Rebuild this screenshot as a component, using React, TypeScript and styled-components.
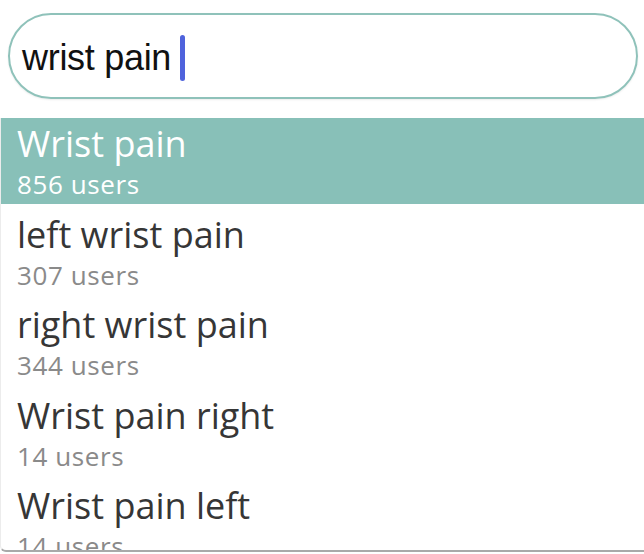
import React from "react";
import styled, { createGlobalStyle } from "styled-components";

const Global = createGlobalStyle`
  html, body { margin: 0; padding: 0; background: #ffffff; }
  body { width: 644px; height: 554px; overflow: hidden; }
`;

const Screen = styled.div`
  width: 644px;
  height: 554px;
  display: flex;
  flex-direction: column;
  background: #ffffff;
  overflow: hidden;
`;

const SearchBar = styled.div`
  padding: 13px 6px 0 8px;
  height: 105px;
  box-sizing: border-box;
`;

const Pill = styled.div`
  height: 86px;
  box-sizing: border-box;
  border: 2px solid #8fc2ba;
  border-radius: 43px;
  display: flex;
  align-items: center;
  padding: 4px 0 0 12px;
  box-shadow: 0 1px 2px rgba(0, 0, 0, 0.08);
`;

const Query = styled.span`
  font-family: "Liberation Sans", Arial, sans-serif;
  font-size: 36px;
  color: #111;
  letter-spacing: -0.3px;
`;

const Caret = styled.span`
  display: inline-block;
  width: 5px;
  height: 46px;
  border-radius: 3px;
  background: #4f63dc;
  margin-left: 9px;
`;

const List = styled.div`
  margin-top: 13px;
  height: 434px;
  box-sizing: border-box;
  border-bottom: 2px solid #a9a9a9;
  border-left: 1px solid #ececec;
  border-bottom-left-radius: 6px;
  display: flex;
  flex-direction: column;
  overflow: hidden;
`;

const Row = styled.div<{ $active?: boolean }>`
  flex: 0 0 auto;
  height: 86px;
  margin-bottom: 4.5px;
  box-sizing: border-box;
  padding: 2px 0 0 16px;
  background: ${(p) => (p.$active ? "#88c0b8" : "transparent")};
  display: flex;
  flex-direction: column;
`;

const Title = styled.div<{ $active?: boolean }>`
  font-family: "Open Sans", sans-serif;
  font-size: 36px;
  line-height: 48px;
  color: ${(p) => (p.$active ? "#ffffff" : "#363636")};
`;

const Sub = styled.div<{ $active?: boolean }>`
  font-family: "Open Sans", sans-serif;
  font-size: 26px;
  line-height: 32px;
  letter-spacing: 0.6px;
  color: ${(p) => (p.$active ? "#ffffff" : "#8a8a8a")};
`;

const items = [
  { title: "Wrist pain", users: "856 users", active: true },
  { title: "left wrist pain", users: "307 users" },
  { title: "right wrist pain", users: "344 users" },
  { title: "Wrist pain right", users: "14 users" },
  { title: "Wrist pain left", users: "14 users" },
];

export default function App() {
  return (
    <>
      <Global />
      <Screen>
        <SearchBar>
          <Pill>
            <Query>wrist pain</Query>
            <Caret />
          </Pill>
        </SearchBar>
        <List>
          {items.map((it) => (
            <Row key={it.title} $active={it.active}>
              <Title $active={it.active}>{it.title}</Title>
              <Sub $active={it.active}>{it.users}</Sub>
            </Row>
          ))}
        </List>
      </Screen>
    </>
  );
}
